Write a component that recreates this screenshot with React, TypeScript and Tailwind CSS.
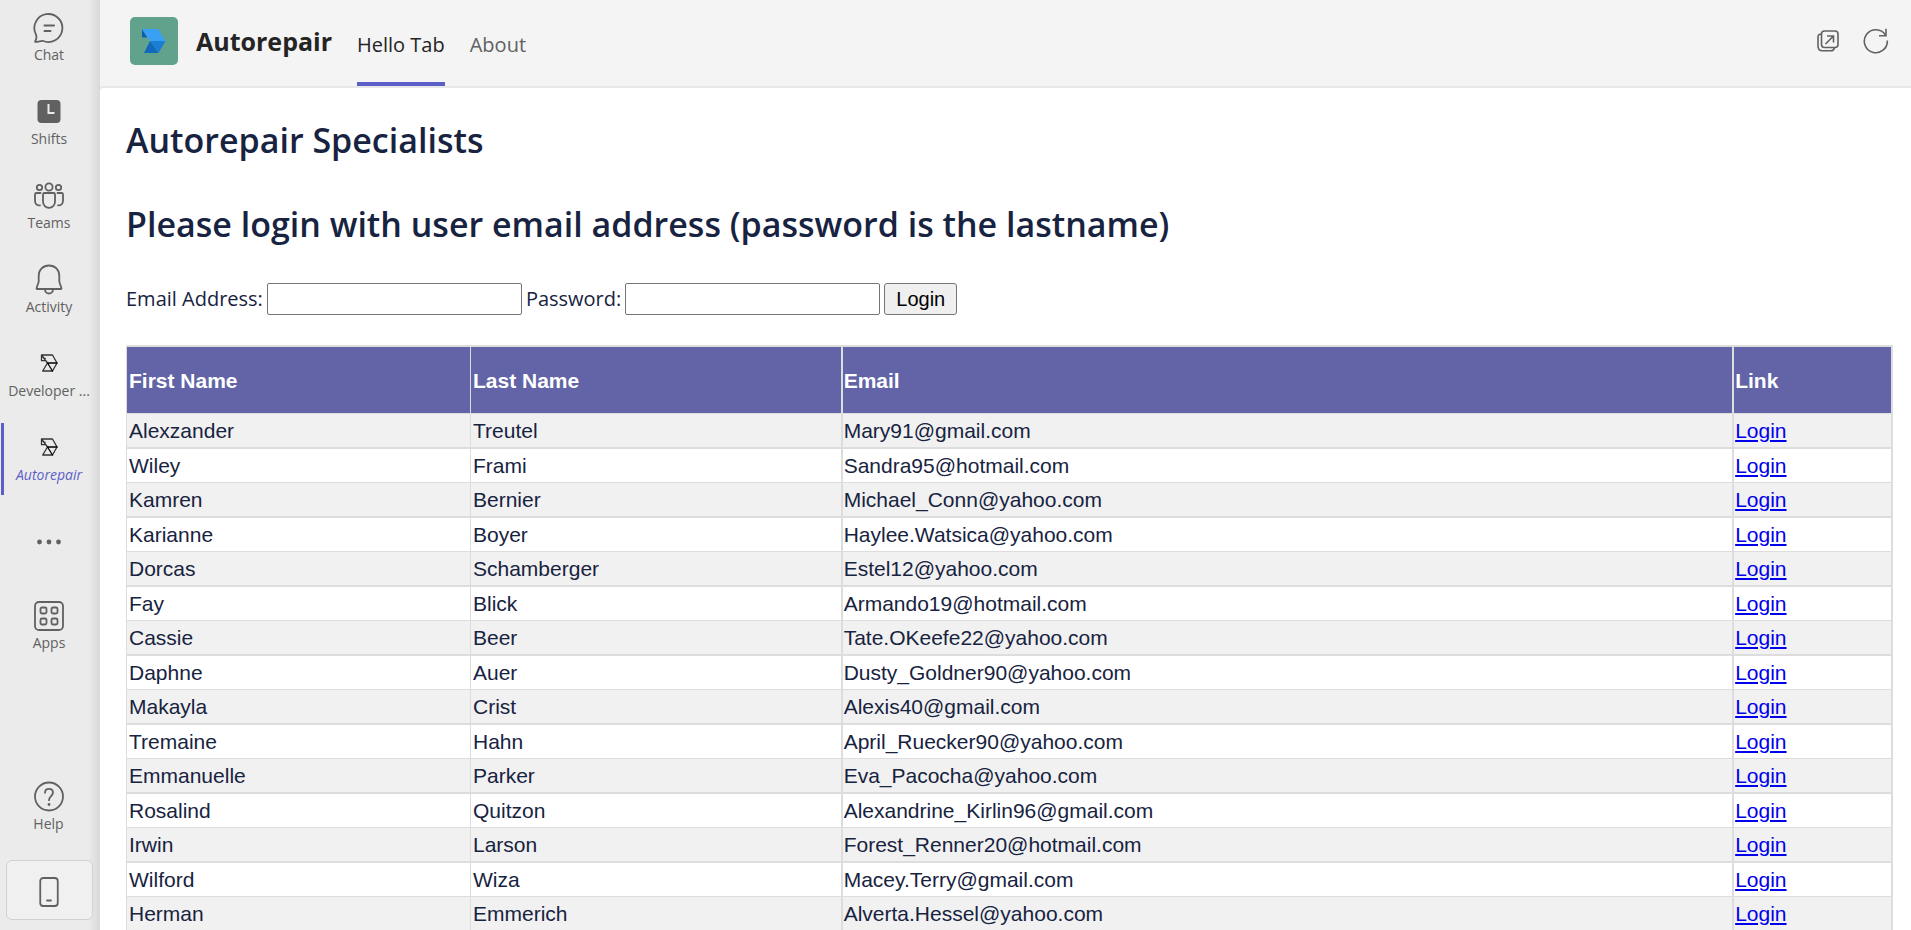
import React from "react";

type Person = [string, string, string];

const people: Person[] = [
  ["Alexzander", "Treutel", "Mary91@gmail.com"],
  ["Wiley", "Frami", "Sandra95@hotmail.com"],
  ["Kamren", "Bernier", "Michael_Conn@yahoo.com"],
  ["Karianne", "Boyer", "Haylee.Watsica@yahoo.com"],
  ["Dorcas", "Schamberger", "Estel12@yahoo.com"],
  ["Fay", "Blick", "Armando19@hotmail.com"],
  ["Cassie", "Beer", "Tate.OKeefe22@yahoo.com"],
  ["Daphne", "Auer", "Dusty_Goldner90@yahoo.com"],
  ["Makayla", "Crist", "Alexis40@gmail.com"],
  ["Tremaine", "Hahn", "April_Ruecker90@yahoo.com"],
  ["Emmanuelle", "Parker", "Eva_Pacocha@yahoo.com"],
  ["Rosalind", "Quitzon", "Alexandrine_Kirlin96@gmail.com"],
  ["Irwin", "Larson", "Forest_Renner20@hotmail.com"],
  ["Wilford", "Wiza", "Macey.Terry@gmail.com"],
  ["Herman", "Emmerich", "Alverta.Hessel@yahoo.com"],
];

const iconProps = {
  width: 32,
  height: 32,
  viewBox: "0 0 32 32",
  fill: "none",
  stroke: "currentColor",
  strokeWidth: 1.8,
  strokeLinecap: "round" as const,
  strokeLinejoin: "round" as const,
  "aria-hidden": true,
};

function ChatIcon() {
  return (
    <svg {...iconProps}>
      <path d="M2 29.800c1.500-2.300 1.900-5 .8-7.600A14 14 0 1 1 9.600 28.800c-2.300 0-4.800 1.200-7.600 1Z" />
      <path d="M11.500 13.500h9.500M11.500 19h6" strokeWidth={2} />
    </svg>
  );
}

function ShiftsIcon() {
  return (
    <svg {...iconProps}>
      <rect x="4.500" y="4" width="23" height="23" rx="4" fill="#616161" stroke="none" />
      <path d="M15.500 8v9h6" stroke="#ebebeb" strokeWidth={2} strokeLinecap="butt" strokeLinejoin="miter" />
    </svg>
  );
}

function TeamsIcon() {
  return (
    <svg {...iconProps}>
      <circle cx="16" cy="7" r="3.600" />
      <circle cx="6.500" cy="7.500" r="2.700" />
      <circle cx="25.500" cy="7.500" r="2.700" />
      <path d="M11.500 13h9a1.500 1.500 0 0 1 1.500 1.500v7.300a6 6 0 0 1-12 0v-7.300a1.500 1.500 0 0 1 1.500-1.500Z" />
      <path d="M7.500 13H3.500A1.500 1.500 0 0 0 2 14.500v6.300c0 3 2 4.800 5 4.600M24.500 13h4a1.500 1.500 0 0 1 1.500 1.500v6.300c0 3-2 4.800-5 4.600" />
    </svg>
  );
}

function BellIcon() {
  return (
    <svg {...iconProps}>
      <path d="M16 1.500c-6 0-10.300 4.500-10.300 10.300v6L3.600 24c-.2.600 0 1 .6 1h23.600c.6 0 .8-.4.600-1l-2.100-6.200v-6C26.300 6 22 1.500 16 1.500Z" />
      <path d="M12 25.500a4 4 0 0 0 8 0" />
    </svg>
  );
}

function PrismIcon() {
  return (
    <svg {...iconProps} stroke="#333333" strokeWidth={1.300}>
      <path d="M8.500 7h11l4.500 8-4.500 8H9.700l4.800-8L8.500 7v5.700h3.500V10.200" />
      <path d="M14.500 15h9.500M14.500 15l5 8" stroke="#000000" />
    </svg>
  );
}

function DotsIcon() {
  return (
    <svg {...iconProps} stroke="none" fill="currentColor">
      <circle cx="6.500" cy="15" r="2.400" />
      <circle cx="16" cy="15" r="2.400" />
      <circle cx="25.500" cy="15" r="2.400" />
    </svg>
  );
}

function AppsIcon() {
  return (
    <svg {...iconProps}>
      <rect x="2" y="2" width="28" height="28" rx="4" />
      <rect x="7.500" y="7.500" width="6" height="6" rx="1.500" />
      <rect x="18.500" y="7.500" width="6" height="6" rx="1.500" />
      <rect x="7.500" y="18.500" width="6" height="6" rx="1.500" />
      <rect x="18.500" y="18.500" width="6" height="6" rx="1.500" />
    </svg>
  );
}

function HelpIcon() {
  return (
    <svg {...iconProps}>
      <circle cx="16" cy="15.500" r="14" />
      <path d="M12 11.800c0-2.400 1.700-4 4-4s4 1.600 4 3.800c0 3.300-4 3.800-4 7.600" />
      <circle cx="16" cy="23.500" r="1.400" fill="currentColor" stroke="none" />
    </svg>
  );
}

function PhoneIcon() {
  return (
    <svg {...iconProps}>
      <rect x="7.250" y="2" width="17.500" height="28" rx="3" />
      <path d="M14 24.500h4" />
    </svg>
  );
}

function RailItem({ label, icon, active = false }: { label: string; icon: React.ReactNode; active?: boolean }) {
  return (
    <button
      type="button"
      className={
        active
          ? "flex h-[72px] w-full flex-col items-center border-l-[3px] border-[#5b5fc7] pt-[9px] pr-[6px] text-[#5b5fc7] italic"
          : "flex h-[72px] w-full flex-col items-center pt-[9px] pr-[3px] text-[#616161]"
      }
    >
      {icon}
      <span className="text-[14px] leading-[22px] whitespace-nowrap">{label}</span>
    </button>
  );
}

function Rail() {
  return (
    <nav className="flex w-[100px] shrink-0 flex-col bg-[linear-gradient(to_left,#d9d9d9,#ebebeb_12px)] pt-[3px] pb-[10px]">
      <div className="flex flex-col gap-3 pl-px">
        <RailItem label="Chat" icon={<ChatIcon />} />
        <RailItem label="Shifts" icon={<ShiftsIcon />} />
        <RailItem label="Teams" icon={<TeamsIcon />} />
        <RailItem label="Activity" icon={<BellIcon />} />
        <RailItem label="Developer ..." icon={<PrismIcon />} />
        <RailItem label="Autorepair" icon={<PrismIcon />} active />
        <button
          type="button"
          aria-label="More apps"
          className="flex h-[72px] w-full items-center justify-center pr-[3px] text-[#616161]"
        >
          <DotsIcon />
        </button>
        <RailItem label="Apps" icon={<AppsIcon />} />
      </div>
      <div className="mt-auto flex flex-col gap-4">
        <RailItem label="Help" icon={<HelpIcon />} />
        <button
          type="button"
          aria-label="Get the mobile app"
          className="mr-[7px] ml-[6px] flex h-[60px] items-center justify-center rounded-md border border-[#d1d1d1] bg-[#f0f0f0] pt-1 pr-[2px] text-[#616161]"
        >
          <PhoneIcon />
        </button>
      </div>
    </nav>
  );
}

function AppLogo() {
  return (
    <svg width="48" height="48" viewBox="0 0 48 48" aria-hidden="true">
      <rect width="48" height="48" rx="5" fill="#61a28d" />
      <path d="M12 12v8.500h5.500z" fill="#0f5ea8" />
      <path d="M12 12h16l7.500 12H20z" fill="#3aa0f3" />
      <path d="M20 24h15.500L28.500 36z" fill="#1a7fd2" />
      <path d="M20 24l-6 12h14.500z" fill="#1169bb" />
    </svg>
  );
}

function TopBar() {
  return (
    <header className="flex h-[88px] shrink-0 items-stretch border-b-2 border-[#e8e8e8] bg-[#f4f4f4] pr-[22px] pl-[30px]">
      <div className="flex items-center gap-[18px] pb-1">
        <AppLogo />
        <span className="pt-[2px] text-[25px] font-bold text-[#242424]">Autorepair</span>
      </div>
      <div className="ml-[25px] flex gap-[25px] text-[20px]">
        <a href="#hello" className="flex items-center border-b-4 border-[#5b5fc7] pt-2 text-[#242424]">
          Hello Tab
        </a>
        <a href="#about" className="flex items-center border-b-4 border-transparent pt-2 text-[#616161]">
          About
        </a>
      </div>
      <div className="ml-auto flex items-center gap-[23px] pb-1 text-[#616161]">
        <button type="button" aria-label="Pop out">
          <svg width="24" height="24" viewBox="0 0 24 24" fill="none" stroke="currentColor" strokeWidth="1.600" aria-hidden="true">
            <rect x="5.500" y="2" width="16.500" height="16.500" rx="3" />
            <path d="M5.500 5C3 5 2 6 2 8v9c0 3 1.600 4.800 4.500 4.800H15c2 0 3-.9 3.500-3" />
            <path d="M9.500 15l8-8M11 7h6.500v6.500" />
          </svg>
        </button>
        <button type="button" aria-label="Refresh">
          <svg width="26" height="26" viewBox="0 0 26 26" fill="none" stroke="currentColor" strokeWidth="1.600" aria-hidden="true">
            <path d="M24.300 12.500A11.500 11.500 0 1 1 22.500 7" />
            <path d="M23 .8v7h-7" />
          </svg>
        </button>
      </div>
    </header>
  );
}

function LoginForm() {
  return (
    <form className="mt-[35px] flex items-center gap-1 text-[20px]" onSubmit={(e) => e.preventDefault()}>
      <label htmlFor="email">Email Address:</label>
      <input id="email" type="text" className="h-8 w-[255px] rounded-[2px] border border-[#767676] bg-white px-1" />
      <label htmlFor="password">Password:</label>
      <input id="password" type="password" className="h-8 w-[255px] rounded-[2px] border border-[#767676] bg-white px-1" />
      <button
        type="submit"
        className="h-8 rounded-[3px] border border-[#767676] bg-[#efefef] px-[11px] font-['Liberation_Sans',Arial,sans-serif] text-[20px] leading-7 text-black"
      >
        Login
      </button>
    </form>
  );
}

function PeopleTable() {
  return (
    <table className="mt-[30px] w-full table-fixed border-separate border-spacing-0 border-t-2 border-r-2 border-[#dddddd] text-left font-['Liberation_Sans',Arial,sans-serif] text-[21px] leading-[33px]">
      <colgroup>
        <col className="w-[344px]" />
        <col className="w-[21%]" />
        <col />
        <col className="w-[9%]" />
      </colgroup>
      <thead>
        <tr className="h-[67px] bg-[#6264a7] text-white">
          <th className="border-b border-l border-[#dddddd] p-0 pl-[2px]">First Name</th>
          <th className="border-b border-l border-[#dddddd] p-0 pl-[2px]">Last Name</th>
          <th className="border-b border-l-2 border-[#dddddd] p-0 pl-px">Email</th>
          <th className="border-b border-l-2 border-[#dddddd] p-0 pl-px">Link</th>
        </tr>
      </thead>
      <tbody className="[&_td]:border-[#dddddd] [&_tr:nth-child(even)_td]:border-b [&_tr:nth-child(odd)]:bg-[#f1f1f1] [&_tr:nth-child(odd)_td]:border-b-2">
        {people.map(([first, last, email]) => (
          <tr key={email}>
            <td className="border-l p-0 pl-[2px]">{first}</td>
            <td className="border-l p-0 pl-[2px]">{last}</td>
            <td className="border-l-2 p-0 pl-px">{email}</td>
            <td className="border-l-2 p-0 pl-px">
              <a href="#login" className="text-[#0000ee] underline">
                Login
              </a>
            </td>
          </tr>
        ))}
      </tbody>
    </table>
  );
}

export default function App() {
  return (
    <div className="flex h-screen overflow-hidden bg-[#ebebeb] font-['Open_Sans','Noto_Sans',sans-serif]">
      <Rail />
      <div className="flex min-w-0 flex-1 flex-col">
        <TopBar />
        <main className="min-h-0 flex-1 overflow-hidden rounded-tl bg-white pr-[18px] pl-[26px] text-[#172340]">
          <h1 className="mt-7 text-[34px] leading-[48px] font-semibold">Autorepair Specialists</h1>
          <h1 className="mt-9 text-[34px] leading-[48px] font-semibold">
            Please login with user email address (password is the lastname)
          </h1>
          <LoginForm />
          <PeopleTable />
        </main>
      </div>
    </div>
  );
}
